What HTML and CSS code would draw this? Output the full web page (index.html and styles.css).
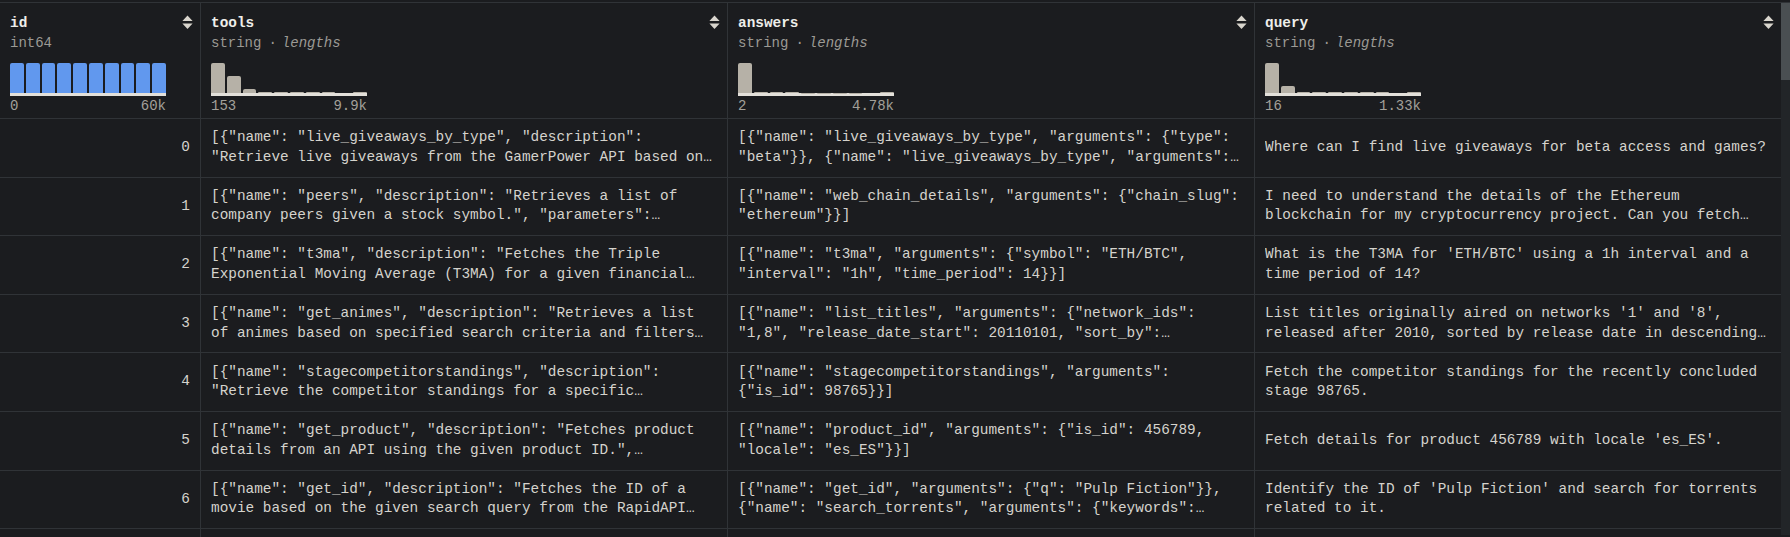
FILE: index.html
```html
<!DOCTYPE html>
<html lang="en">
<head>
<meta charset="utf-8">
<title>Dataset viewer</title>
<link rel="stylesheet" href="styles.css">
</head>
<body>
<div class="viewer">
  <div class="table">
    <div class="head">
      <div class="hcell">
        <div class="htop"><span class="hname">id</span><svg class="sort" viewBox="0 0 11 14" width="11" height="14"><path d="M5.5 0.6 L10.6 6 H0.4 Z M0.4 8.6 H10.6 L5.5 14 Z" fill="currentColor"/></svg></div>
        <div class="htype">int64</div>
        <div class="hist">
          <div class="bars">
            <div class="bar blue" style="height:30px"></div><div class="bar blue" style="height:30px"></div><div class="bar blue" style="height:30px"></div><div class="bar blue" style="height:30px"></div><div class="bar blue" style="height:30px"></div><div class="bar blue" style="height:30px"></div><div class="bar blue" style="height:30px"></div><div class="bar blue" style="height:30px"></div><div class="bar blue" style="height:30px"></div><div class="bar blue" style="height:30px"></div>
          </div>
          <div class="axis"></div>
          <div class="range"><span>0</span><span>60k</span></div>
        </div>
      </div>
      <div class="hcell">
        <div class="htop"><span class="hname">tools</span><svg class="sort" viewBox="0 0 11 14" width="11" height="14"><path d="M5.5 0.6 L10.6 6 H0.4 Z M0.4 8.6 H10.6 L5.5 14 Z" fill="currentColor"/></svg></div>
        <div class="htype">string<span class="dot">·</span><em>lengths</em></div>
        <div class="hist">
          <div class="bars">
            <div class="bar" style="height:30px"></div><div class="bar" style="height:17px"></div><div class="bar" style="height:4px"></div><div class="bar" style="height:1.5px"></div><div class="bar" style="height:1.5px"></div><div class="bar" style="height:1.5px"></div><div class="bar" style="height:1.5px"></div><div class="bar" style="height:1.5px"></div><div class="bar" style="height:0px"></div><div class="bar" style="height:1.5px"></div>
          </div>
          <div class="axis"></div>
          <div class="range"><span>153</span><span>9.9k</span></div>
        </div>
      </div>
      <div class="hcell">
        <div class="htop"><span class="hname">answers</span><svg class="sort" viewBox="0 0 11 14" width="11" height="14"><path d="M5.5 0.6 L10.6 6 H0.4 Z M0.4 8.6 H10.6 L5.5 14 Z" fill="currentColor"/></svg></div>
        <div class="htype">string<span class="dot">·</span><em>lengths</em></div>
        <div class="hist">
          <div class="bars">
            <div class="bar" style="height:30px"></div><div class="bar" style="height:1.5px"></div><div class="bar" style="height:1.5px"></div><div class="bar" style="height:1.5px"></div><div class="bar" style="height:0.5px"></div><div class="bar" style="height:0.5px"></div><div class="bar" style="height:0.5px"></div><div class="bar" style="height:0.5px"></div><div class="bar" style="height:0px"></div><div class="bar" style="height:1.5px"></div>
          </div>
          <div class="axis"></div>
          <div class="range"><span>2</span><span>4.78k</span></div>
        </div>
      </div>
      <div class="hcell last">
        <div class="htop"><span class="hname">query</span><svg class="sort" viewBox="0 0 11 14" width="11" height="14"><path d="M5.5 0.6 L10.6 6 H0.4 Z M0.4 8.6 H10.6 L5.5 14 Z" fill="currentColor"/></svg></div>
        <div class="htype">string<span class="dot">·</span><em>lengths</em></div>
        <div class="hist">
          <div class="bars">
            <div class="bar" style="height:30px"></div><div class="bar" style="height:7px"></div><div class="bar" style="height:1.5px"></div><div class="bar" style="height:1.5px"></div><div class="bar" style="height:1.5px"></div><div class="bar" style="height:1.5px"></div><div class="bar" style="height:1.5px"></div><div class="bar" style="height:1.5px"></div><div class="bar" style="height:0px"></div><div class="bar" style="height:1.5px"></div>
          </div>
          <div class="axis"></div>
          <div class="range"><span>16</span><span>1.33k</span></div>
        </div>
      </div>
    </div>

    <div class="row">
      <div class="cell num">0</div>
      <div class="cell"><div class="clamp">[{"name": "live_giveaways_by_type", "description": "Retrieve live giveaways from the GamerPower API based on the specified type.", "parameters": {"type": {"description": "The type of giveaways to retrieve (e.g., game, loot, beta).", "type": "str", "default": "game"}}}]</div></div>
      <div class="cell"><div class="clamp">[{"name": "live_giveaways_by_type", "arguments": {"type": "beta"}}, {"name": "live_giveaways_by_type", "arguments": {"type": "game"}}]</div></div>
      <div class="cell last"><div class="clamp">Where can I find live giveaways for beta access and games?</div></div>
    </div>
    <div class="row">
      <div class="cell num">1</div>
      <div class="cell"><div class="clamp">[{"name": "peers", "description": "Retrieves a list of company peers given a stock symbol.", "parameters": {"symbol": {"description": "The stock symbol for the company.", "type": "str", "default": ""}}}]</div></div>
      <div class="cell"><div class="clamp">[{"name": "web_chain_details", "arguments": {"chain_slug": "ethereum"}}]</div></div>
      <div class="cell last"><div class="clamp">I need to understand the details of the Ethereum blockchain for my cryptocurrency project. Can you fetch the details for 'ethereum'?</div></div>
    </div>
    <div class="row">
      <div class="cell num">2</div>
      <div class="cell"><div class="clamp">[{"name": "t3ma", "description": "Fetches the Triple Exponential Moving Average (T3MA) for a given financial instrument.", "parameters": {"symbol": {"type": "str"}}}]</div></div>
      <div class="cell"><div class="clamp">[{"name": "t3ma", "arguments": {"symbol": "ETH/BTC", "interval": "1h", "time_period": 14}}]</div></div>
      <div class="cell last"><div class="clamp">What is the T3MA for 'ETH/BTC' using a 1h interval and a time period of 14?</div></div>
    </div>
    <div class="row">
      <div class="cell num">3</div>
      <div class="cell"><div class="clamp">[{"name": "get_animes", "description": "Retrieves a list of animes based on specified search criteria and filters from the RapidAPI Anime API.", "parameters": {}}]</div></div>
      <div class="cell"><div class="clamp">[{"name": "list_titles", "arguments": {"network_ids": "1,8", "release_date_start": 20110101, "sort_by": "release_date", "sort_order": "desc"}}]</div></div>
      <div class="cell last"><div class="clamp">List titles originally aired on networks '1' and '8', released after 2010, sorted by release date in descending order.</div></div>
    </div>
    <div class="row">
      <div class="cell num">4</div>
      <div class="cell"><div class="clamp">[{"name": "stagecompetitorstandings", "description": "Retrieve the competitor standings for a specific Motorsport stage using the given stage ID.", "parameters": {}}]</div></div>
      <div class="cell"><div class="clamp">[{"name": "stagecompetitorstandings", "arguments": {"is_id": 98765}}]</div></div>
      <div class="cell last"><div class="clamp">Fetch the competitor standings for the recently concluded stage 98765.</div></div>
    </div>
    <div class="row">
      <div class="cell num">5</div>
      <div class="cell"><div class="clamp">[{"name": "get_product", "description": "Fetches product details from an API using the given product ID.", "parameters": {"is_id": {"type": "int"}}}]</div></div>
      <div class="cell"><div class="clamp">[{"name": "product_id", "arguments": {"is_id": 456789, "locale": "es_ES"}}]</div></div>
      <div class="cell last"><div class="clamp">Fetch details for product 456789 with locale 'es_ES'.</div></div>
    </div>
    <div class="row">
      <div class="cell num">6</div>
      <div class="cell"><div class="clamp">[{"name": "get_id", "description": "Fetches the ID of a movie based on the given search query from the RapidAPI similar movies service.", "parameters": {}}]</div></div>
      <div class="cell"><div class="clamp">[{"name": "get_id", "arguments": {"q": "Pulp Fiction"}}, {"name": "search_torrents", "arguments": {"keywords": "Pulp Fiction", "quantity": 10}}]</div></div>
      <div class="cell last"><div class="clamp">Identify the ID of 'Pulp Fiction' and search for torrents related to it.</div></div>
    </div>
    <div class="row">
      <div class="cell num">7</div>
      <div class="cell"><div class="clamp">[{"name": "downloadminecraftjson", "description": "Downloads the Minecraft .json configuration file for a specified version.", "parameters": {}}]</div></div>
      <div class="cell"><div class="clamp">[{"name": "downloadminecraftjson", "arguments": {"minecraftversion": "1.16.5"}}]</div></div>
      <div class="cell last"><div class="clamp">Download the Minecraft .json configuration file for version 1.16.5.</div></div>
    </div>
  </div>
  <div class="scrollbar"><div class="thumb"></div></div>
</div>
</body>
</html>
```

FILE: styles.css
```css
* { box-sizing: border-box; }

html, body {
  margin: 0;
  padding: 0;
  background: #1b1c1f;
  height: 100%;
  overflow: hidden;
}

body {
  padding-top: 2px;
  font-family: "Liberation Mono", "DejaVu Sans Mono", monospace;
  color: #d5d3cd;
}

.viewer {
  display: flex;
  border-top: 1px solid #303337;
  height: calc(100% - 2px);
}

.table {
  width: 1781px;
  flex: none;
}

.head,
.row {
  display: grid;
  grid-template-columns: 201px 527px 527px 526px;
  border-bottom: 1px solid #303337;
}

.hcell {
  height: 115px;
  padding: 10px 7px 0 10px;
  border-right: 1px solid #303337;
  display: flex;
  flex-direction: column;
}

.hcell.last,
.cell.last { border-right: none; }

.htop {
  display: flex;
  justify-content: space-between;
  align-items: center;
  height: 20px;
}

.hname {
  font-weight: bold;
  font-size: 14.4px;
  line-height: 20px;
  color: #eeeeea;
}

.sort {
  color: #d9d5cd;
  display: block;
  margin-top: -2px;
}

.htype {
  font-size: 14px;
  line-height: 20px;
  color: #9c9a95;
}

.htype .dot {
  margin: 0 5px 0 7px;
}

.htype em {
  font-style: italic;
}

.hist {
  width: 156px;
  margin-top: 10px;
}

.bars {
  height: 30px;
  display: flex;
  align-items: flex-end;
  gap: 2px;
}

.bar {
  flex: 1;
  background: #b6b1a7;
  border-radius: 2px 2px 0 0;
}

.bar.blue {
  background: #6198ee;
}

.axis {
  height: 3px;
  background: #e3e0da;
}

.range {
  display: flex;
  justify-content: space-between;
  font-size: 14px;
  line-height: 20px;
  color: #a3a09a;
}

.cell {
  height: 57.6px;
  padding: 0 10px;
  border-right: 1px solid #303337;
  display: flex;
  align-items: center;
  font-size: 14.4px;
  line-height: 19.5px;
  overflow: hidden;
}

.cell.num {
  justify-content: flex-end;
}

.clamp {
  display: -webkit-box;
  -webkit-line-clamp: 2;
  -webkit-box-orient: vertical;
  overflow: hidden;
  width: 100%;
  white-space: normal;
}

.scrollbar {
  width: 9px;
  flex: none;
  background: #222528;
}

.thumb {
  height: 77px;
  background: #4a4f52;
}
```
